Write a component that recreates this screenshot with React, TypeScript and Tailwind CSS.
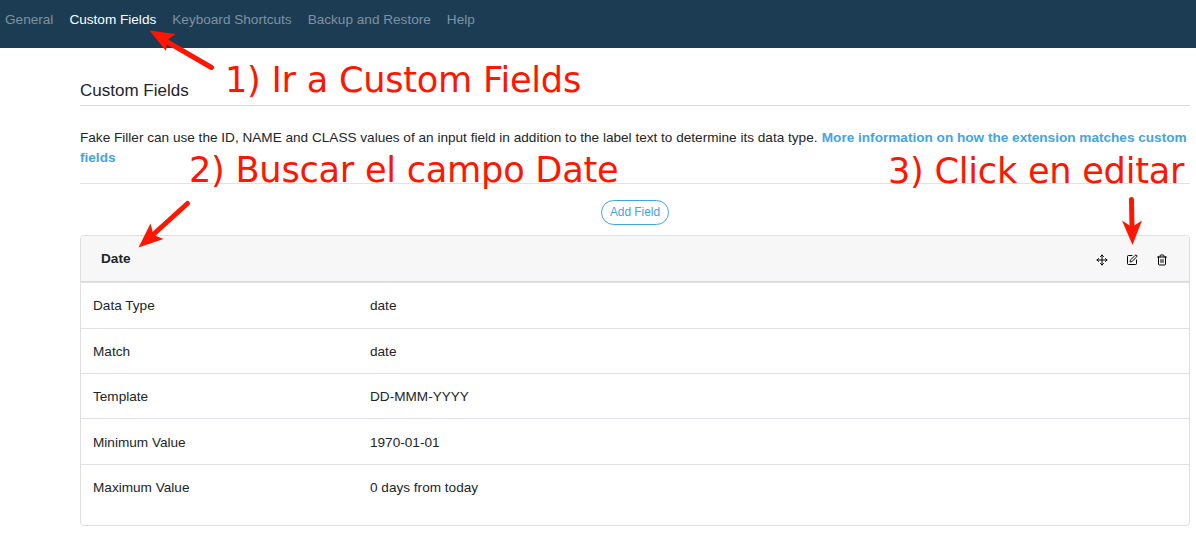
import { Move, SquarePen, Trash2 } from "lucide-react";

const navItems = ["General", "Custom Fields", "Keyboard Shortcuts", "Backup and Restore", "Help"];

const rows = [
  ["Data Type", "date"],
  ["Match", "date"],
  ["Template", "DD-MMM-YYYY"],
  ["Minimum Value", "1970-01-01"],
  ["Maximum Value", "0 days from today"],
];

function Annotations() {
  return (
    <div className="pointer-events-none absolute inset-0 font-['DejaVu_Sans',sans-serif] text-[35.2px] leading-[42px] tracking-[-0.27px] whitespace-nowrap text-[#ff1500]">
      <span className="absolute top-[59px] left-[225px]">1) Ir a Custom Fields</span>
      <span className="absolute top-[149px] left-[189px]">2) Buscar el campo Date</span>
      <span className="absolute top-[150px] left-[888px]">3) Click en editar</span>
      <svg className="absolute inset-0" width="1196" height="533" fill="#ff1500" stroke="#ff1500">
        <path d="M211.500 67.500L164 40" strokeWidth="5" strokeLinecap="round" />
        <path d="M149.500 30.500L175.500 34L167.500 40L166 51Z" stroke="none" />
        <path d="M187.500 203.500L151 236.500" strokeWidth="5" strokeLinecap="round" />
        <path d="M138.500 247.500L150.500 223.500L153.500 235L163.500 239Z" stroke="none" />
        <path d="M1131.500 199.500L1132 228" strokeWidth="5" strokeLinecap="round" />
        <path d="M1132.500 245L1122 220.500L1132 227L1142 220.500Z" stroke="none" />
      </svg>
    </div>
  );
}

export default function App() {
  return (
    <div className="relative h-[533px] w-[1196px] overflow-hidden bg-white font-['Liberation_Sans',sans-serif] text-[13.6px] leading-[20.4px] text-[#212529]">
      <nav className="flex h-12 gap-4 bg-[#1b3c53] pt-[10px] pl-[5px] text-[#8091a0]">
        {navItems.map((item) => (
          <a key={item} className={item === "Custom Fields" ? "text-white" : ""}>
            {item}
          </a>
        ))}
      </nav>
      <main className="pt-8 pr-[6px] pl-20">
        <h2 className="h-[26px] border-b border-[#dadbdc] pt-px text-[17px] leading-[20.4px]">Custom Fields</h2>
        <p className="mt-[22px] h-[41px]">
          Fake Filler can use the ID, NAME and CLASS values of an input field in addition to the label text to determine its
          data type.{" "}
          <a className="ml-[0.5px] font-bold text-[#45a4df]">More information on how the extension matches custom fields</a>
        </p>
        <hr className="mt-[14px] border-[#e3e3e4]" />
        <div className="mt-4 flex justify-center">
          <button className="h-[25px] w-[68px] rounded-full border border-[#45a4df] text-[11.9px] leading-[17.85px] text-[#45a4df]">
            Add Field
          </button>
        </div>
        <section className="mt-[10px] h-[291px] rounded border border-[#dfdfe0]">
          <header className="flex h-[46px] items-center justify-between rounded-t-[3px] border-b border-[#dadbde] bg-[#f7f7f7] pr-[21px] pl-5">
            <span className="pt-[2px] font-bold">Date</span>
            <div className="flex gap-[18px] pt-[3px] text-black">
              <Move size={12} />
              <SquarePen size={12} />
              <Trash2 size={12} />
            </div>
          </header>
          <dl className="pt-[0.3px]">
            {rows.map(([label, value]) => (
              <div key={label} className="grid h-[45.400px] grid-cols-[277px_1fr] border-t border-[#dee2e6] px-3 pt-[13.05px]">
                <dt>{label}</dt>
                <dd>{value}</dd>
              </div>
            ))}
          </dl>
        </section>
      </main>
      <Annotations />
    </div>
  );
}
